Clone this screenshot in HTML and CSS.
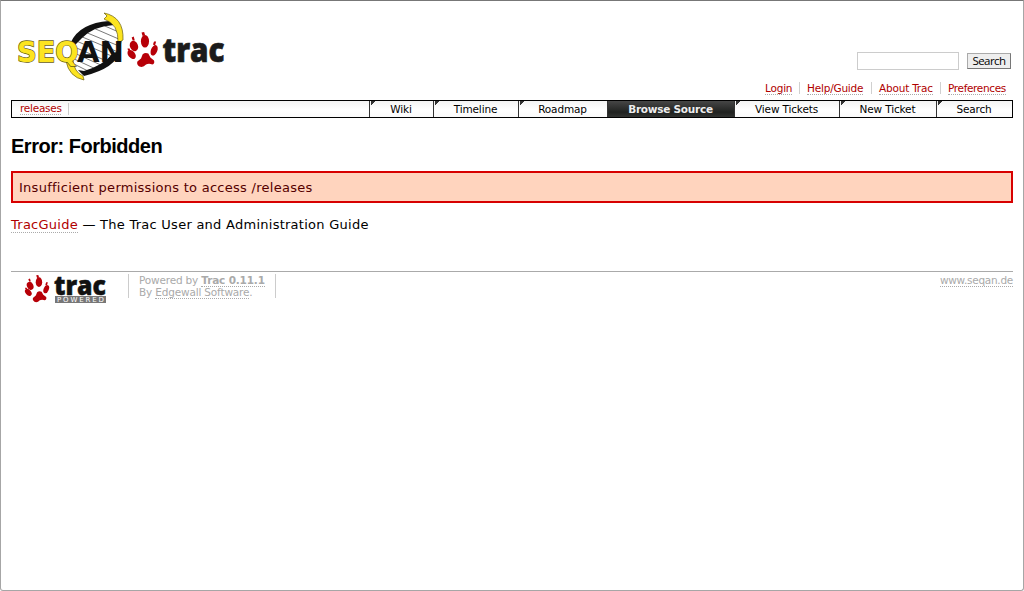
FILE: index.html
```
<!DOCTYPE html>
<html lang="en">
<head>
<meta charset="utf-8">
<title>Error: Forbidden</title>
<link rel="stylesheet" href="styles.css">
</head>
<body>
<div class="page">
  <header class="banner">
    <svg class="logo" width="216" height="74" viewBox="10 10 216 74" role="img" aria-label="SeqAn trac">
      <defs>
        <clipPath id="helix"><path d="M110 23Q116 24 119 30L120 42L117 56Q104 63 85 74Q72 68 72 55Q73 40 87 31Q97 25 110 23Z"/></clipPath>
        <g id="paw">
          <ellipse cx="16.800" cy="9.800" rx="3.900" ry="6.300"/>
          <ellipse cx="6.200" cy="14.500" rx="3.900" ry="5.300" transform="rotate(-20 6.200 14.500)"/>
          <ellipse cx="25.600" cy="18.800" rx="3.100" ry="5.500" transform="rotate(20 25.600 18.800)"/>
          <ellipse cx="4" cy="23" rx="3.300" ry="5" transform="rotate(-38 4 23)"/>
          <path d="M14.600 22.800Q17 20.500 20 22L22 26L25.500 29Q26.500 32 23.900 33Q20.500 31.500 17.800 33Q15 36.500 11.400 35Q8.500 33 9.500 30L13 27Z"/>
          <path d="M13.500 1L16 .5L17 4L14.500 4.500ZM4 6L6 5L7 9L5 9ZM25.500 10L27.500 10L26.500 14L24.500 13ZM0 17L2 17L3 20L.5 19Z"/>
        </g>
      </defs>
      <path clip-path="url(#helix)" d="M98 23L121 33M91 27L121 40M85 32L119 46M80 36L118 52M74 40L114 57M72 46L109 62M72 52L103 66M72 58L98 70M72 63L92 73" stroke="#555" stroke-width=".8"/>
      <path d="M71 42Q80 23 109 21L114 25Q94 26 82 38L75 45Z" fill="#111"/>
      <path d="M120 51Q116 68 84 76L78 70L84 71Q104 65 113 53Z" fill="#111"/>
      <path d="M121 33Q122 47 116 57" fill="none" stroke="#222"/>
      <path d="M104 13Q124 17 123 40L118 43Q119 24 104 19L107 16Z" fill="#fce420" stroke="#675c12" stroke-width=".7"/>
      <path d="M67 60L73 60Q74 72 83 76L84 80Q69 77 66 61Z" fill="#fce420" stroke="#675c12" stroke-width=".7"/>
      <text class="seq" x="17" y="61.800" textLength="61.500" lengthAdjust="spacingAndGlyphs">SEQ</text>
      <text class="an" x="77" y="61.800" textLength="47" lengthAdjust="spacingAndGlyphs">AN</text>
      <use href="#paw" transform="translate(127.500 31.500) scale(1.040 1)" fill="#b70008"/>
      <text class="trac" x="162.500" y="61.500" textLength="62" lengthAdjust="spacingAndGlyphs">trac</text>
    </svg>
    <form class="search">
      <input class="search-input" type="text" aria-label="Search query">
      <button class="search-button" type="button">Search</button>
    </form>
  </header>
  <nav class="metanav">
    <div class="meta"><a class="link">Login</a></div>
    <div class="meta"><a class="link">Help/Guide</a></div>
    <div class="meta"><a class="link">About Trac</a></div>
    <div class="meta"><a class="link">Preferences</a></div>
  </nav>
  <nav class="mainnav">
    <div class="path"><a class="link">releases</a></div>
    <a class="tab">Wiki</a>
    <a class="tab">Timeline</a>
    <a class="tab">Roadmap</a>
    <a class="tab active">Browse Source</a>
    <a class="tab">View Tickets</a>
    <a class="tab">New Ticket</a>
    <a class="tab">Search</a>
  </nav>
  <main>
    <h1 class="title">Error: Forbidden</h1>
    <div class="error">Insufficient permissions to access /releases</div>
    <p class="guide"><a class="link">TracGuide</a> — The Trac User and Administration Guide</p>
  </main>
  <footer class="footer">
    <svg class="powered" width="107" height="32" viewBox="11 272 107 32" role="img" aria-label="Trac powered">
      <use href="#paw" transform="translate(25 274.500) scale(.83 .78)" fill="#b70008"/>
      <text class="trac-small" x="54" y="295" textLength="52" lengthAdjust="spacingAndGlyphs">trac</text>
      <rect x="55" y="296" width="51" height="7" fill="#777"/>
      <text class="powered-text" x="57" y="302" textLength="47">POWERED</text>
    </svg>
    <p class="credits">Powered by <a class="mark"><b>Trac 0.11.1</b></a><br>By <a class="mark">Edgewall Software</a>.</p>
    <p class="site"><a class="mark">www.seqan.de</a></p>
  </footer>
</div>
</body>
</html>
```
FILE: styles.css
```
* { box-sizing: border-box; }
body { margin: 0; background: #fff; color: #000; font-family: Verdana, "DejaVu Sans", sans-serif; }
.page {
  height: 591px;
  padding: 9px 10px 0;
  border: 1px solid #a6a6a6;
  border-top-color: #777;
  border-radius: 0 0 3px 3px;
}
.banner { display: flex; justify-content: space-between; height: 72px; }
.logo { display: block; margin-left: -1px; overflow: visible; }
.seq, .an { font: bold 29px "DejaVu Sans", sans-serif; }
.trac, .trac-small { font-family: "Open Sans", sans-serif; font-weight: 800; }
.seq { fill: #fce420; stroke: #675c12; stroke-width: 1.4px; paint-order: stroke; }
.an { fill: #111; }
.trac { font-size: 33px; fill: #1b1b1b; stroke: #1b1b1b; stroke-width: .7px; }
.trac-small { font-size: 27px; fill: #111; stroke: #111; stroke-width: .5px; }
.powered-text { font: 7px "DejaVu Sans", sans-serif; fill: #fff; }
.search { display: flex; align-items: center; gap: 8px; height: 18px; margin: 42px 2px 0 0; }
.search-input { width: 102px; height: 18px; padding: 0 3px; border: 1px solid #ccc; font-size: 10px; }
.search-button {
  width: 44px; height: 16px; padding: 0;
  border: 1px solid #aaa; border-right-color: #777; border-bottom-color: #777;
  background: #eee; color: #000; font: 11.500px/12px "Open Sans", sans-serif; letter-spacing: -.55px;
}
.link { color: #b00000; border-bottom: 1px dotted #aaa; }
.metanav { display: grid; grid-template-columns: 41px 72px 69px 73px; justify-content: end; height: 18px; font-size: 10.500px; letter-spacing: -.2px; }
.meta { height: 12px; padding: 0 7px; line-height: 12px; white-space: nowrap; }
.meta + .meta { border-left: 1px solid #d0d0d0; }
.meta:last-child { letter-spacing: -.35px; }
.meta .link { display: inline-block; height: 13px; line-height: 13px; }
.mainnav {
  display: grid; grid-template-columns: 357px 64px 85px 89px 127px 105px 97px 1fr;
  height: 18px; border: 1px solid #000;
  background: linear-gradient(#f3f3f3, #fff 55%, #fafafa);
  font-size: 10.500px; line-height: 16px; letter-spacing: -.15px;
}
.path { width: 57px; height: 12px; margin-top: 2px; padding-left: 8px; border-right: 1px solid #ccc; }
.path .link { display: block; width: 41px; height: 12px; line-height: 11px; letter-spacing: -.25px; }
.tab {
  padding-right: 1px; border-left: 1px solid #333; text-align: center;
  background: linear-gradient(135deg, #333 3px, transparent 3.500px) 1px 0 no-repeat;
}
.active { background: linear-gradient(#464646, #202220 70%, #303230); color: #eee; font-weight: bold; letter-spacing: -.25px; }
.title { margin: 16px 0 0; font: bold 20px/24px "Liberation Sans", sans-serif; letter-spacing: -.48px; }
.error {
  height: 32px; margin-top: 13px; padding-left: 6px; border: 2px solid #d70000;
  background: #ffd4be; color: #500; font-size: 13px; line-height: 29px; letter-spacing: .27px;
}
.guide { margin: 14px 0 0; font-size: 13px; line-height: 16px; letter-spacing: .26px; }
.footer { display: flex; height: 34px; margin-top: 38px; border-top: 1px solid #aaa; color: #aaa; font-size: 10.500px; line-height: 12px; letter-spacing: -.17px; }
.powered { display: block; overflow: visible; letter-spacing: 0; }
.credits { width: 148px; height: 24px; margin: 2px 0 0 10px; padding: 0 0 0 10px; border: solid #ccc; border-width: 0 1px; white-space: nowrap; }
.mark { border-bottom: 1px dotted #aaa; }
.site { margin: 2px 0 0 auto; letter-spacing: -.27px; }
```
